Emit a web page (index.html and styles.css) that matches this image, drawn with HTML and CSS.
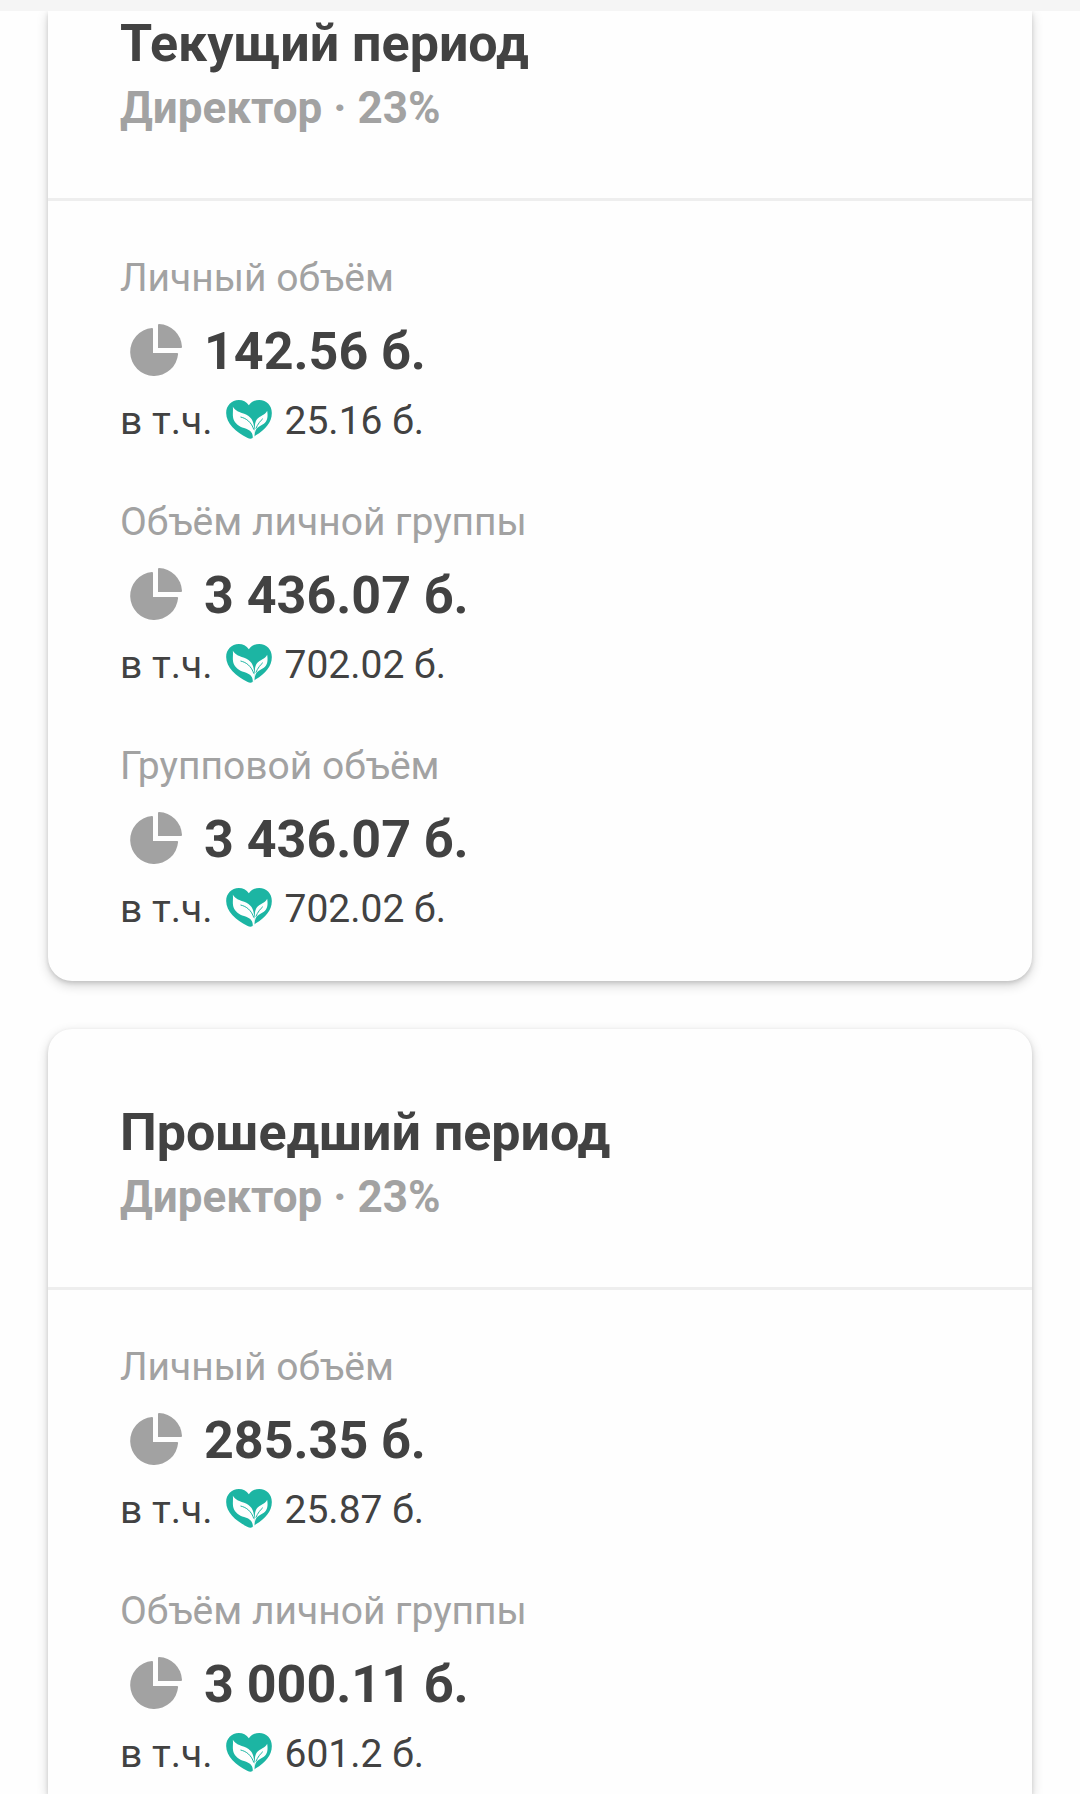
FILE: index.html
```html
<!DOCTYPE html>
<html lang="ru">
  <head>
    <meta charset="UTF-8" />
    <meta name="viewport" content="width=device-width, initial-scale=1.0" />
    <title>Объёмы</title>
    <link rel="stylesheet" href="styles.css">
  </head>
  <body>
    <svg width="0" height="0" class="sprite" aria-hidden="true">
      <symbol id="pie" viewBox="0 0 52 52">
        <path d="M22 4Q23 4 23 5V29H47Q48.2 29 48.1 30A24 24 0 1 1 22 4Z" />
        <path d="M28 1Q28 0 29 0A24 24 0 0 1 52 23Q52 24 51 24H28Z" />
      </symbol>
      <symbol id="heart" viewBox="4 6 137 117">
        <path class="heart-body" d="M72 22C65 11 54 6 42 6C20 6 4 23 4 45C4 76 34 103 67 119Q80 126 86 117L93 112C121 95 141 73 141 45C141 23 126 6 103 6C90 6 79 11 72 22Z" />
        <path class="heart-leaf" d="M24 26C32 39 46 43 58 47C78 54 87 68 88 91L90 98L89 117L84 120C85 105 77 97 64 92C47 87 35 81 28 68C21 54 26 40 24 26Z" />
        <path class="heart-leaf" d="M127 38C130 56 128 69 117 77C107 84 96 87 92 98L89 108C90 88 89 72 97 63C105 53 121 51 127 38Z" />
        <path class="heart-vein" d="M47 57C65 61 80 73 87 95M114 62C108 67 98 79 93 92" />
      </symbol>
    </svg>

    <div class="topbar"></div>

    <main class="periods">
      <section class="card card-scrolled">
        <header class="card-header">
          <h2>Текущий период</h2>
          <p>Директор · 23%</p>
        </header>
        <div class="card-body">
          <div class="volume">
            <h3>Личный объём</h3>
            <div class="volume-total">
              <svg class="icon-pie"><use href="#pie" /></svg>
              <span>142.56 б.</span>
            </div>
            <div class="volume-part">
              <span>в т.ч.</span>
              <svg class="icon-heart"><use href="#heart" /></svg>
              <span>25.16 б.</span>
            </div>
          </div>
          <div class="volume">
            <h3>Объём личной группы</h3>
            <div class="volume-total">
              <svg class="icon-pie"><use href="#pie" /></svg>
              <span>3 436.07 б.</span>
            </div>
            <div class="volume-part">
              <span>в т.ч.</span>
              <svg class="icon-heart"><use href="#heart" /></svg>
              <span>702.02 б.</span>
            </div>
          </div>
          <div class="volume">
            <h3>Групповой объём</h3>
            <div class="volume-total">
              <svg class="icon-pie"><use href="#pie" /></svg>
              <span>3 436.07 б.</span>
            </div>
            <div class="volume-part">
              <span>в т.ч.</span>
              <svg class="icon-heart"><use href="#heart" /></svg>
              <span>702.02 б.</span>
            </div>
          </div>
        </div>
      </section>

      <section class="card card-last">
        <header class="card-header">
          <h2>Прошедший период</h2>
          <p>Директор · 23%</p>
        </header>
        <div class="card-body">
          <div class="volume">
            <h3>Личный объём</h3>
            <div class="volume-total">
              <svg class="icon-pie"><use href="#pie" /></svg>
              <span>285.35 б.</span>
            </div>
            <div class="volume-part">
              <span>в т.ч.</span>
              <svg class="icon-heart"><use href="#heart" /></svg>
              <span>25.87 б.</span>
            </div>
          </div>
          <div class="volume">
            <h3>Объём личной группы</h3>
            <div class="volume-total">
              <svg class="icon-pie"><use href="#pie" /></svg>
              <span>3 000.11 б.</span>
            </div>
            <div class="volume-part">
              <span>в т.ч.</span>
              <svg class="icon-heart"><use href="#heart" /></svg>
              <span>601.2 б.</span>
            </div>
          </div>
        </div>
      </section>
    </main>
  </body>
</html>
```

FILE: styles.css
```css
:root {
  --text: #424242;
  --muted: #a2a2a2;
  --line: #eeeeee;
  --teal: #1cb5a3;
  --radius: 24px;
}

* {
  margin: 0;
  padding: 0;
  box-sizing: border-box;
}

body {
  display: flex;
  flex-direction: column;
  min-height: 100vh;
  background: #fefefe;
  color: var(--text);
  font-family: Roboto, sans-serif;
}

.sprite {
  position: absolute;
}

/* sits above the cards, so their shadow never covers it */
.topbar {
  position: relative;
  z-index: 1;
  height: 11px;
  background: #f5f5f5;
}

.periods {
  flex: 1;
  display: flex;
  flex-direction: column;
  gap: 48px;
  padding: 0 48px;
}

.card {
  background: #fefefe;
  border-radius: var(--radius);
  box-shadow: 0 4px 12px rgba(0, 0, 0, 0.18), 0 2px 4px rgba(0, 0, 0, 0.12);
}

.card-header {
  padding: 71px 72px 59px;
  border-bottom: 3px solid var(--line);
}

.card-header h2 {
  font-size: 52px;
  font-weight: 700;
  line-height: 66px;
}

.card-header p {
  color: var(--muted);
  font-size: 44px;
  font-weight: 700;
  line-height: 62px;
}

.card-body {
  display: flex;
  flex-direction: column;
  gap: 44px;
  padding: 47px 72px 45px;
}

.card-scrolled {
  border-radius: 0 0 var(--radius) var(--radius);
}

.card-scrolled .card-header {
  padding-top: 0;
}

.card-last {
  flex: 1;
  border-radius: var(--radius) var(--radius) 0 0;
}

.card-last .card-body {
  padding-bottom: 0;
}

.volume h3 {
  color: var(--muted);
  font-size: 39px;
  font-weight: 400;
  line-height: 60px;
}

.volume-total {
  display: flex;
  align-items: center;
  gap: 22px;
  height: 86px;
  padding-left: 10px;
  font-size: 52px;
  font-weight: 700;
}

.volume-part {
  display: flex;
  align-items: center;
  gap: 13px;
  height: 54px;
  font-size: 39px;
}

.icon-pie {
  width: 52px;
  height: 52px;
  margin-bottom: 2px;
  fill: var(--muted);
}

.icon-heart {
  width: 46px;
  height: 39px;
  margin-bottom: 4px;
}

.heart-body {
  fill: var(--teal);
}

.heart-leaf {
  fill: #fefefe;
}

.heart-vein {
  fill: none;
  stroke: var(--teal);
  stroke-width: 3;
}
```
